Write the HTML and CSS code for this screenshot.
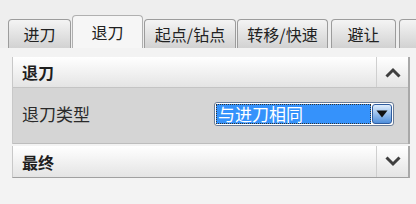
FILE: index.html
```html
<!DOCTYPE html>
<html lang="zh">
<head>
  <meta charset="UTF-8">
  <title>退刀</title>
  <link rel="stylesheet" href="styles.css">
</head>
<body>
  <div class="tabs">
    <div class="tab tab-in">进刀</div>
    <div class="tab tab-out active">退刀</div>
    <div class="tab tab-start">起点/钻点</div>
    <div class="tab tab-move">转移/快速</div>
    <div class="tab tab-avoid">避让</div>
    <div class="tab tab-cut"></div>
  </div>
  <div class="page">
    <div class="group">
      <div class="group-head">
        <span class="group-title">退刀</span>
        <span class="toggle">
          <svg width="16" height="11" viewBox="0 0 16 11"><path d="M1.5 9.5 L8 3 L14.5 9.5" fill="none" stroke="#3f3f3f" stroke-width="3"/></svg>
        </span>
      </div>
      <div class="group-row">
        <span class="row-label">退刀类型</span>
        <div class="combo">
          <span class="combo-value">与进刀相同</span>
          <span class="combo-btn">
            <svg width="12" height="8" viewBox="0 0 12 8"><path d="M0.5 0.5 H11.5 L6 7.5 Z" fill="#111"/></svg>
          </span>
        </div>
      </div>
    </div>
    <div class="group group-closed">
      <div class="group-head">
        <span class="group-title">最终</span>
        <span class="toggle">
          <svg width="16" height="11" viewBox="0 0 16 11"><path d="M1.5 1.5 L8 8 L14.5 1.5" fill="none" stroke="#3f3f3f" stroke-width="3"/></svg>
        </span>
      </div>
    </div>
  </div>
</body>
</html>
```

FILE: styles.css
```css
* {
  box-sizing: border-box;
}
body, html {
  margin: 0;
}
body {
  width: 416px;
  height: 204px;
  overflow: hidden;
  background: #ececec;
  font-family: "Noto Sans CJK SC", "Liberation Sans", sans-serif;
  color: #222;
}
.tabs {
  display: flex;
  align-items: flex-end;
  height: 48px;
  padding-left: 8px;
  background: #eeeeee;
  white-space: nowrap;
}
.tab {
  flex-shrink: 0;
  height: 29px;
  margin-right: 1px;
  display: flex;
  align-items: center;
  justify-content: center;
  font-size: 16px;
  color: #222;
  border: 1px solid #9c9c9c;
  border-bottom: none;
  border-radius: 4px 4px 0 0;
  background: linear-gradient(#f4f4f4, #d2d2d2);
}
.tab-in {
  width: 63px;
}
.tab.active {
  width: 71px;
  height: 33px;
  background: #f6f6f6;
  border-color: #b0b0b0;
}
.tab-start {
  width: 92px;
}
.tab-move {
  width: 91px;
}
.tab-avoid {
  width: 65px;
  margin-left: 2px;
}
.tab-cut {
  width: 30px;
  margin-left: 2px;
}
.page {
  height: 156px;
  padding: 9px 6px 0 12px;
  background: #f3f3f3;
}
.group {
  border-left: 1px solid #c8c8c8;
  border-right: 2px solid #a8a8a8;
}
.group-head {
  height: 31px;
  display: flex;
  align-items: center;
  justify-content: space-between;
  background: linear-gradient(#ffffff, #e4e4e4);
  border-bottom: 1px solid #c4c4c4;
}
.group-title {
  padding-left: 9px;
  font-size: 16px;
  font-weight: bold;
  color: #1e1e1e;
}
.toggle {
  width: 32px;
  height: 100%;
  display: flex;
  align-items: center;
  justify-content: center;
  border-left: 1px solid #cfcfcf;
}
.group-row {
  height: 56px;
  display: flex;
  align-items: center;
  justify-content: space-between;
  padding: 0 14px 4px 9px;
  background: #d5d5d5;
  border-bottom: 1px solid #bdbdbd;
}
.row-label {
  font-size: 17px;
  color: #2a2a2a;
}
.combo {
  width: 180px;
  height: 24px;
  display: flex;
  border: 1px solid #6a7d98;
  border-radius: 3px;
  background: #fff;
  padding: 1px;
}
.combo-value {
  flex: 1;
  display: flex;
  align-items: center;
  padding-left: 2px;
  font-size: 17px;
  color: #fff;
  background: #3592fb;
  outline: 1px dotted #333;
  outline-offset: -1px;
  line-height: 1;
}
.combo-btn {
  width: 20px;
  margin-left: 1px;
  display: flex;
  align-items: center;
  justify-content: center;
  border-radius: 3px;
  background: linear-gradient(#e0edfb, #4f8fdc);
  border: 1px solid #2f5c9e;
}
.group-closed {
  margin-top: 2px;
  border-bottom: 1px solid #a0a0a0;
}
.group-closed .group-head {
  border-bottom: none;
}
```
